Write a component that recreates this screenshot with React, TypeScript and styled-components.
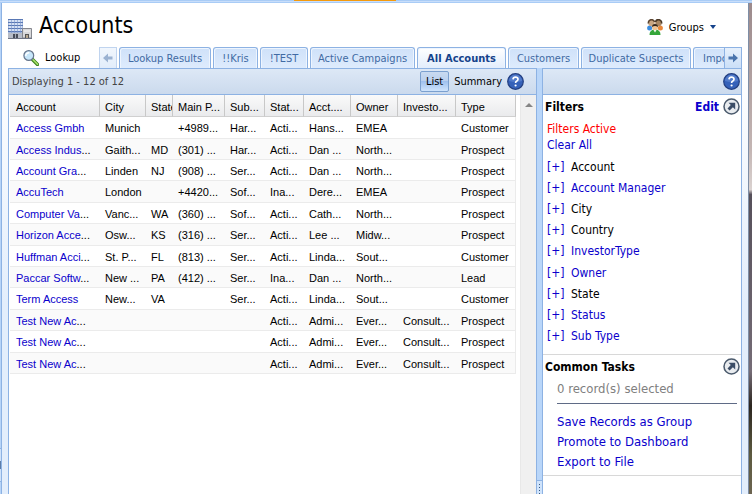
import React from "react";
import styled, { createGlobalStyle, css } from "styled-components";

const UI = `"DejaVu Sans Condensed", "Noto Sans", sans-serif`;

const GlobalStyle = createGlobalStyle`
  * { box-sizing: border-box; }
  body { margin: 0; background: #fff; font-family: ${UI}; font-size: 11px; color: #000; }
  button { font: inherit; color: inherit; background: none; border: 0; padding: 0; margin: 0; }
  a { color: #0a00cc; text-decoration: none; }
  svg { display: block; flex: none; }
  h1, h2, ul, p { margin: 0; padding: 0; font-weight: normal; }
`;

const Page = styled.div`
  display: flex;
  flex-direction: column;
  min-height: 100vh;
  background: #b9d6f8;
`;

const TopEdge = styled.div`
  display: flex;
  height: 3px;
  background: linear-gradient(#a9ccf6 0 1px, #c9defa 1px);
  border-bottom: 1px solid #a9ccf6;
`;

const Highlight = styled.div`
  width: 102px;
  height: 1px;
  margin-left: 294px;
  background: #f59a0c;
`;

const Stage = styled.div`
  flex: 1;
  display: flex;
`;

const Gutter = styled.div`
  display: flex;
  flex-direction: column;
  justify-content: flex-end;
  width: 2px;
  padding-bottom: 12px;
  background: #b7d4f8;
  border-right: 1px solid #8db2e3;
`;

const GutterMark = styled.div`
  height: 34px;
  border: solid #8db2e3;
  border-width: 1px 0;
  background: linear-gradient(#cfe2fa 12px, #5d7da8 12px 20px, #cfe2fa 20px);
`;

const Backdrop = styled.div`
  width: 4px;
  border-left: 1px solid #7e8ea6;
  background: linear-gradient(#9c8a8c, #c4b6b4 30%, #dad2d0 38%, #56505a 39%, #756c76 75%, #2c2620 82%, #5d5a40 92%, #6c6450);
`;

const Window = styled.div`
  flex: 1;
  min-width: 0;
  display: flex;
  flex-direction: column;
  padding: 0 6px;
  background: linear-gradient(#fff, #fff 60px, #e3eefc 300px);
`;

const Header = styled.header`
  display: flex;
  align-items: center;
  height: 44px;
  padding-right: 26px;
`;

const Title = styled.h1`
  flex: 1;
  margin-left: 7px;
  font-size: 23px;
  line-height: 44px;
`;

const GroupsButton = styled.button`
  display: flex;
  align-items: center;
  gap: 6px;
  margin-top: 4px;
`;

const TabBar = styled.nav`
  display: flex;
  align-items: flex-end;
  height: 21px;
`;

const LookupButton = styled.button`
  display: flex;
  align-items: center;
  gap: 6px;
  width: 91px;
  height: 21px;
  padding-left: 15px;
`;

const Scroller = styled.button<{ $off?: boolean }>`
  display: flex;
  align-items: center;
  justify-content: center;
  flex: none;
  width: 18px;
  height: 21px;
  color: #4a74ad;
  background: linear-gradient(#e6f0fc, #cbdff8);
  border: 1px solid #8db2e3;
  border-bottom: 0;
  ${(p) => p.$off && css`opacity: 0.55;`}
`;

const TabList = styled.div`
  flex: 1;
  min-width: 0;
  display: flex;
  gap: 2px;
  margin-left: 2px;
  overflow: hidden;
`;

const Tab = styled.button<{ $w: number; $active?: boolean }>`
  flex: none;
  width: ${(p) => p.$w}px;
  height: 21px;
  white-space: nowrap;
  color: #416aa3;
  background: linear-gradient(#cfe1f9, #deebfd);
  border: 1px solid #8db2e3;
  border-bottom: 0;
  border-radius: 3px 3px 0 0;
  box-shadow: inset 1px 1px #eef5fe, inset -1px 0 #eef5fe;
  ${(p) =>
    p.$active &&
    css`
      color: #15428b;
      font-weight: bold;
      background: linear-gradient(#fff, #e2edfc);
    `}
`;

const Body = styled.div`
  flex: 1;
  display: flex;
`;

const toolbar = css`
  display: flex;
  align-items: center;
  height: 27px;
  background: linear-gradient(#dde8f6, #cbdaed);
  border-top: 1px solid #8db2e3;
  border-bottom: 1px solid #8db2e3;
`;

const GridPanel = styled.main`
  flex: 1;
  min-width: 0;
  display: flex;
  flex-direction: column;
  background: #fff;
  border-left: 1px solid #8db2e3;
`;

const GridToolbar = styled.div`
  ${toolbar}
  padding: 0 12px 0 3px;
`;

const Count = styled.p`
  flex: 1;
  color: #444;
`;

const ViewButton = styled.button<{ $on?: boolean }>`
  height: 21px;
  padding: 0 4px;
  border: 1px solid transparent;
  border-radius: 2px;
  ${(p) =>
    p.$on &&
    css`
      padding: 0 5px;
      border-color: #7ba0cf;
      background: linear-gradient(#c9daf0, #bad0ee 48%, #a0c1ee 50%, #cfe4fc);
    `}
`;

const IconButton = styled.button`
  display: flex;
`;

const GridArea = styled.div`
  flex: 1;
  display: flex;
  justify-content: space-between;
`;

const Track = styled.div`
  display: flex;
  justify-content: center;
  width: 16px;
  padding-top: 8px;
  background: #f0f0f0;
  border-left: 1px solid #e8e8e8;
`;

const Table = styled.table`
  align-self: flex-start;
  width: 506px;
  margin-left: 1px;
  table-layout: fixed;
  border-collapse: separate;
  border-spacing: 0;
  font-family: "Liberation Sans", sans-serif;
  font-size: 11px;
`;

const HeadRow = styled.tr`
  height: 22px;
  background: linear-gradient(#fafafa, #e9eaec);
`;

const HeadCell = styled.th<{ $w: number }>`
  width: ${(p) => p.$w}px;
  padding: 2px 0 0 5px;
  overflow: hidden;
  white-space: nowrap;
  font-weight: normal;
  text-align: left;
  border-right: 1px solid #c8c8c8;
  border-bottom: 1px solid #d0d0d0;
  &:first-child { padding-left: 6px; }
`;

const Row = styled.tr`
  height: 21px;
  &:nth-child(5n + 1), &:nth-child(5n + 4) { height: 22px; }
  &:nth-child(even) { background: #fafafa; }
`;

const Cell = styled.td`
  padding: 1px 0 0 5px;
  overflow: hidden;
  white-space: nowrap;
  border-bottom: 1px solid #ebebeb;
  &:first-child { padding-left: 6px; }
  &:last-child { border-right: 1px solid #ebebeb; }
`;

const Splitter = styled.div`
  display: flex;
  flex-direction: column;
  width: 7px;
  background: #b9d6f9;
  border: solid #8db2e3;
  border-width: 0 1px;
`;

const Grip = styled.div`
  height: 14px;
  margin-top: auto;
  padding: 3px 2px;
  border-top: 1px solid #8db2e3;
  background: #cfe3fb;
`;

const Dots = styled.div`
  width: 1px;
  height: 10px;
  background: repeating-linear-gradient(#37587f 0 1px, transparent 1px 3px);
`;

const Sidebar = styled.aside`
  width: 199px;
  display: flex;
  flex-direction: column;
  background: #fff;
  border-right: 1px solid #8db2e3;
`;

const SideToolbar = styled.div`
  ${toolbar}
  justify-content: flex-end;
  padding-right: 1px;
`;

const Section = styled.section<{ $pad: number }>`
  padding-bottom: ${(p) => p.$pad}px;
  border-bottom: 1px solid #d8d8d8;
  font-size: 12px;
`;

const SectionHead = styled.div`
  display: flex;
  align-items: center;
  gap: 4px;
  height: 23px;
  padding: 0 1px 0 2px;
  font-weight: bold;
`;

const SectionTitle = styled.h2`
  flex: 1;
  font-size: 12px;
  font-weight: bold;
`;

const FilterState = styled.div`
  display: flex;
  flex-direction: column;
  padding: 3px 4px;
  line-height: 16px;
  color: #f00;
`;

const FilterList = styled.ul`
  padding-left: 4px;
  list-style: none;
`;

const FilterItem = styled.li`
  display: flex;
  align-items: center;
  height: 21px;
  &:nth-child(4n + 5) { height: 22px; }
`;

const Toggle = styled.button`
  width: 24px;
  text-align: left;
  color: #0a00cc;
`;

const Tasks = styled.div`
  padding: 0 4px 0 14px;
  font-size: 13px;
`;

const Selected = styled.p`
  height: 26px;
  line-height: 22px;
  color: #808080;
  border-bottom: 1px solid #5f6b86;
`;

const TaskList = styled.ul`
  padding-top: 8px;
  line-height: 20px;
  list-style: none;
`;

const IconSlot = styled.div`
  padding-top: 8px;
`;

const BuildingsIcon = () => (
  <svg width="24" height="20" viewBox="0 0 24 20">
    <path d="M0 0h15v19H0z" fill="#a6b9dc" />
    <path d="M0 .5h15M0 3.5h15M0 6.5h15M0 9.5h15M0 12.5h15" stroke="#5978b5" />
    <path d="M1 2h13M1 5h13M1 8h13M1 11h13" stroke="#e4edfb" strokeWidth="1.4" />
    <path d="M3.5 1v14M6.5 1v14M9.5 1v14M12.5 1v14" stroke="#7b96ca" strokeWidth=".6" />
    <path d="M0 14h15v5H0z" fill="#b6bcc8" />
    <path d="M5 15h5v4H5z" fill="#474c58" />
    <path d="M7.5 15v4" stroke="#a0a7b6" />
    <path d="M14.500 9.500h9v9.500h-9z" fill="#d8d8da" stroke="#85878e" />
    <path d="M16 12h6" stroke="#f5f5f5" />
    <path d="M17 15h4v4h-4z" fill="#555" />
    <path d="M18 16h2v3h-2z" fill="#b9a890" />
    <path d="M0 19.500h24" stroke="#6e7484" />
  </svg>
);

const LookupIcon = () => (
  <svg width="16" height="16" viewBox="0 0 16 16">
    <path d="M9.500 9.500l5 5" stroke="#3d8420" strokeWidth="3.400" strokeLinecap="round" />
    <path d="M9.800 9.500l4.700 4.700" stroke="#a9e269" strokeWidth="1.600" strokeLinecap="round" />
    <circle cx="5.800" cy="5.500" r="4.900" fill="#c7e6fa" stroke="#66758c" strokeWidth="1.200" />
    <path d="M2.800 6a3.200 3.200 0 0 1 3.500-3.300" fill="none" stroke="#fff" strokeWidth="1.500" />
  </svg>
);

const GroupsIcon = () => (
  <svg width="16" height="16" viewBox="0 0 16 16">
    <circle cx="2.600" cy="9" r="2.500" fill="#3b8de0" />
    <circle cx="13.400" cy="9" r="2.500" fill="#e8873a" />
    <circle cx="4.500" cy="4" r="3.200" fill="#c9a682" />
    <path d="M1.500 4.500a3 3 0 0 1 6-1.500" fill="none" stroke="#5a432e" strokeWidth="1.600" />
    <circle cx="11.500" cy="4" r="3.200" fill="#a98763" />
    <path d="M8.500 3a3 3 0 0 1 6 1.500" fill="none" stroke="#4a3826" strokeWidth="1.600" />
    <path d="M2.500 16q0-5.500 5.500-5.500t5.500 5.500z" fill="#35a63a" />
    <path d="M6.500 11l1.500 2.500 1.500-2.500z" fill="#fff" />
    <circle cx="8" cy="8.300" r="3" fill="#efc393" />
    <path d="M5 8a3 3 0 0 1 6 0q-3-2-6 0" fill="#33261c" />
  </svg>
);

const HelpIcon = () => (
  <svg width="17" height="17" viewBox="0 0 17 17">
    <circle cx="8.500" cy="8.500" r="7.800" fill="#3561b9" stroke="#233f80" strokeWidth="1.200" />
    <path d="M2 8a6.500 6.500 0 0 1 13 0q-6 2-13 0" fill="#6f95dc" opacity=".5" />
    <path d="M6 6.400q.2-2.200 2.500-2.200t2.500 2q0 1.300-1.500 2.100-.9.500-.9 1.600" fill="none" stroke="#fff" strokeWidth="1.700" />
    <circle cx="8.600" cy="12.500" r="1.100" fill="#fff" />
  </svg>
);

const PopOutIcon = () => (
  <svg width="17" height="17" viewBox="0 0 17 17">
    <circle cx="8.500" cy="8.500" r="7.500" fill="#e9ecef" stroke="#4b5a6c" strokeWidth="1.500" />
    <path d="M5.500 4.800h6.700v6.700l-2.300-2.300-3.300 3.300-2.100-2.100 3.300-3.300z" fill="#3c4d66" />
  </svg>
);

const Arrow = ({ left }: { left?: boolean }) => (
  <svg width="10" height="10" viewBox="0 0 10 10">
    <path d={left ? "M0 5l5-4.500V3.500h4.500v3H5v3z" : "M10 5L5 .5v3H.5v3H5v3z"} fill="currentColor" />
  </svg>
);

const tabs: [string, number][] = [
  ["Lookup Results", 92],
  ["!!Kris", 45],
  ["!TEST", 48],
  ["Active Campaigns", 105],
  ["All Accounts", 89],
  ["Customers", 71],
  ["Duplicate Suspects", 110],
  ["Imports", 58],
];

const columns: [string, number][] = [
  ["Account", 90],
  ["City", 46],
  ["State", 27],
  ["Main P...", 52],
  ["Sub...", 40],
  ["Stat...", 39],
  ["Acct....", 47],
  ["Owner", 47],
  ["Investo...", 58],
  ["Type", 60],
];

const rows = [
  ["Access Gmbh", "Munich", "", "+4989...", "Har...", "Acti...", "Hans...", "EMEA", "", "Customer"],
  ["Access Indus...", "Gaith...", "MD", "(301) ...", "Har...", "Acti...", "Dan ...", "North...", "", "Prospect"],
  ["Account Gra...", "Linden", "NJ", "(908) ...", "Ser...", "Acti...", "Dan ...", "North...", "", "Prospect"],
  ["AccuTech", "London", "", "+4420...", "Sof...", "Ina...", "Dere...", "EMEA", "", "Prospect"],
  ["Computer Va...", "Vanc...", "WA", "(360) ...", "Sof...", "Acti...", "Cath...", "North...", "", "Prospect"],
  ["Horizon Acce...", "Osw...", "KS", "(316) ...", "Ser...", "Acti...", "Lee ...", "Midw...", "", "Prospect"],
  ["Huffman Acci...", "St. P...", "FL", "(813) ...", "Ser...", "Acti...", "Linda...", "Sout...", "", "Customer"],
  ["Paccar Softw...", "New ...", "PA", "(412) ...", "Ser...", "Ina...", "Dan ...", "North...", "", "Lead"],
  ["Term Access", "New...", "VA", "", "Ser...", "Acti...", "Linda...", "Sout...", "", "Customer"],
  ["Test New Ac...", "", "", "", "", "Acti...", "Admi...", "Ever...", "Consult...", "Prospect"],
  ["Test New Ac...", "", "", "", "", "Acti...", "Admi...", "Ever...", "Consult...", "Prospect"],
  ["Test New Ac...", "", "", "", "", "Acti...", "Admi...", "Ever...", "Consult...", "Prospect"],
];

const filters: [string, boolean][] = [
  ["Account", false],
  ["Account Manager", true],
  ["City", false],
  ["Country", false],
  ["InvestorType", true],
  ["Owner", true],
  ["State", false],
  ["Status", true],
  ["Sub Type", true],
];

const AccountLink = ({ name }: { name: string }) => {
  const cut = name.endsWith("...");
  return (
    <>
      <a href="#account">{cut ? name.slice(0, -3) : name}</a>
      {cut && "..."}
    </>
  );
};

export default function App() {
  return (
    <Page>
      <GlobalStyle />
      <TopEdge><Highlight /></TopEdge>
      <Stage>
        <Gutter><GutterMark /></Gutter>
        <Window>
          <Header>
            <IconSlot><BuildingsIcon /></IconSlot>
            <Title>Accounts</Title>
            <GroupsButton>
              <GroupsIcon />
              Groups
              <svg width="6" height="4" viewBox="0 0 6 4"><path d="M0 0h6L3 4z" fill="#15428b" /></svg>
            </GroupsButton>
          </Header>
          <TabBar>
            <LookupButton><LookupIcon />Lookup</LookupButton>
            <Scroller $off aria-label="Scroll tabs left"><Arrow left /></Scroller>
            <TabList>
              {tabs.map(([label, w]) => (
                <Tab key={label} $w={w} $active={label === "All Accounts"}>{label}</Tab>
              ))}
            </TabList>
            <Scroller aria-label="Scroll tabs right"><Arrow /></Scroller>
          </TabBar>
          <Body>
            <GridPanel>
              <GridToolbar>
                <Count>Displaying 1 - 12 of 12</Count>
                <ViewButton $on>List</ViewButton>
                <ViewButton>Summary</ViewButton>
                <IconButton aria-label="Help"><HelpIcon /></IconButton>
              </GridToolbar>
              <GridArea>
                <Table>
                  <thead>
                    <HeadRow>
                      {columns.map(([label, w]) => <HeadCell key={label} $w={w}>{label}</HeadCell>)}
                    </HeadRow>
                  </thead>
                  <tbody>
                    {rows.map((row, r) => (
                      <Row key={r}>
                        {row.map((text, c) => (
                          <Cell key={c}>{c === 0 ? <AccountLink name={text} /> : text}</Cell>
                        ))}
                      </Row>
                    ))}
                  </tbody>
                </Table>
                <Track>
                  <svg width="8" height="4" viewBox="0 0 8 4"><path d="M0 4l4-4 4 4z" fill="#858585" /></svg>
                </Track>
              </GridArea>
            </GridPanel>
            <Splitter><Grip><Dots /></Grip></Splitter>
            <Sidebar>
              <SideToolbar>
                <IconButton aria-label="Help"><HelpIcon /></IconButton>
              </SideToolbar>
              <Section $pad={7}>
                <SectionHead>
                  <SectionTitle>Filters</SectionTitle>
                  <a href="#edit">Edit</a>
                  <IconButton aria-label="Open filters"><PopOutIcon /></IconButton>
                </SectionHead>
                <FilterState>
                  Filters Active
                  <a href="#clear">Clear All</a>
                </FilterState>
                <FilterList>
                  {filters.map(([label, linked]) => (
                    <FilterItem key={label}>
                      <Toggle aria-label={`Expand ${label}`}>[+]</Toggle>
                      {linked ? <a href="#filter">{label}</a> : label}
                    </FilterItem>
                  ))}
                </FilterList>
              </Section>
              <Section $pad={3}>
                <SectionHead>
                  <SectionTitle>Common Tasks</SectionTitle>
                  <IconButton aria-label="Open tasks"><PopOutIcon /></IconButton>
                </SectionHead>
                <Tasks>
                  <Selected>0 record(s) selected</Selected>
                  <TaskList>
                    <li><a href="#save">Save Records as Group</a></li>
                    <li><a href="#promote">Promote to Dashboard</a></li>
                    <li><a href="#export">Export to File</a></li>
                  </TaskList>
                </Tasks>
              </Section>
            </Sidebar>
          </Body>
        </Window>
        <Backdrop />
      </Stage>
    </Page>
  );
}
